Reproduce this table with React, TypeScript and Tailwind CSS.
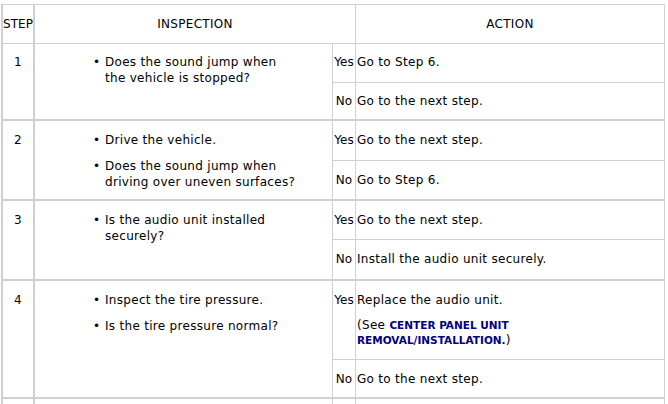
import React from 'react';

type Outcome = {
  label: string;
  h: string;
  content: React.ReactNode;
};

type Step = {
  num: string;
  pad: string;
  checks: string[];
  outcomes: Outcome[];
};

const steps: Step[] = [
  {
    num: '1',
    pad: 'pt-[10px]',
    checks: ['Does the sound jump when the vehicle is stopped?'],
    outcomes: [
      { label: 'Yes', h: 'h-[38px] pt-[10px]', content: 'Go to Step 6.' },
      { label: 'No', h: 'h-[36px] pt-[10px]', content: 'Go to the next step.' }
    ]
  },
  {
    num: '2',
    pad: 'pt-[11px]',
    checks: ['Drive the vehicle.', 'Does the sound jump when driving over uneven surfaces?'],
    outcomes: [
      { label: 'Yes', h: 'h-[39px] pt-[11px]', content: 'Go to the next step.' },
      { label: 'No', h: 'h-[38px] pt-[11px]', content: 'Go to Step 6.' }
    ]
  },
  {
    num: '3',
    pad: 'pt-[11px]',
    checks: ['Is the audio unit installed securely?'],
    outcomes: [
      { label: 'Yes', h: 'h-[38px] pt-[11px]', content: 'Go to the next step.' },
      { label: 'No', h: 'h-[39px] pt-[11px]', content: 'Install the audio unit securely.' }
    ]
  },
  {
    num: '4',
    pad: 'pt-[11px]',
    checks: ['Inspect the tire pressure.', 'Is the tire pressure normal?'],
    outcomes: [
      {
        label: 'Yes',
        h: 'h-[78px] pt-[11px]',
        content: (
          <>
            <p>Replace the audio unit.</p>
            <p className="mt-[10px] w-[240px] leading-[15px]">
              (See{' '}
              <span className="font-bold text-[10.5px] leading-[15px] tracking-normal text-[#000080]">
                CENTER PANEL UNIT REMOVAL/INSTALLATION.
              </span>
              )
            </p>
          </>
        )
      },
      { label: 'No', h: 'h-[37px] pt-[11px]', content: 'Go to the next step.' }
    ]
  }
];

const line = 'border-[#d0d0d0]';

const App: React.FC = () => {
  return (
    <div className="w-[668px] h-[404px] overflow-hidden bg-white pt-[4px] pl-px font-['DejaVu_Sans','Verdana',sans-serif] text-[12px] leading-4 tracking-[0.3px] text-black">
      <div className="w-[664px]">
        {/* header */}
        <div className={`flex h-[40px] border-t border-b border-r ${line}`}>
          <div className={`w-[34px] border-x-2 ${line} pt-[11px] text-center whitespace-nowrap tracking-normal`}>STEP</div>
          <div className={`w-[321px] border-r ${line} pt-[11px] text-center`}>INSPECTION</div>
          <div className="flex-1 pt-[11px] text-center">ACTION</div>
        </div>

        {steps.map((step) => (
          <div key={step.num} className={`flex border-b-2 border-r ${line}`}>
            <div className={`w-[34px] border-x-2 ${line} ${step.pad} text-center`}>{step.num}</div>
            <div className={`w-[298px] border-r ${line} ${step.pad} pl-[58px]`}>
              <ul className="flex flex-col gap-[10px]">
                {step.checks.map((check) => (
                  <li key={check} className="flex">
                    <span className="w-[12px] shrink-0 tracking-normal">•</span>
                    <span className="w-[193px]">{check}</span>
                  </li>
                ))}
              </ul>
            </div>
            <div className="flex-1 flex flex-col">
              {step.outcomes.map((o, i) => (
                <div key={o.label} className={`flex ${i > 0 ? `border-t ${line}` : ''}`}>
                  <div className={`w-[23px] border-r ${line} ${o.h} text-center whitespace-nowrap tracking-normal`}>
                    {o.label}
                  </div>
                  <div className={`flex-1 pl-px ${o.h}`}>{o.content}</div>
                </div>
              ))}
            </div>
          </div>
        ))}

        {/* next row, cut off */}
        <div className={`flex h-[20px] border-r ${line}`}>
          <div className={`w-[34px] border-x-2 ${line}`} />
          <div className={`w-[298px] border-r ${line}`} />
          <div className={`w-[23px] border-r ${line}`} />
          <div className="flex-1" />
        </div>
      </div>
    </div>
  );
};

export default App;
